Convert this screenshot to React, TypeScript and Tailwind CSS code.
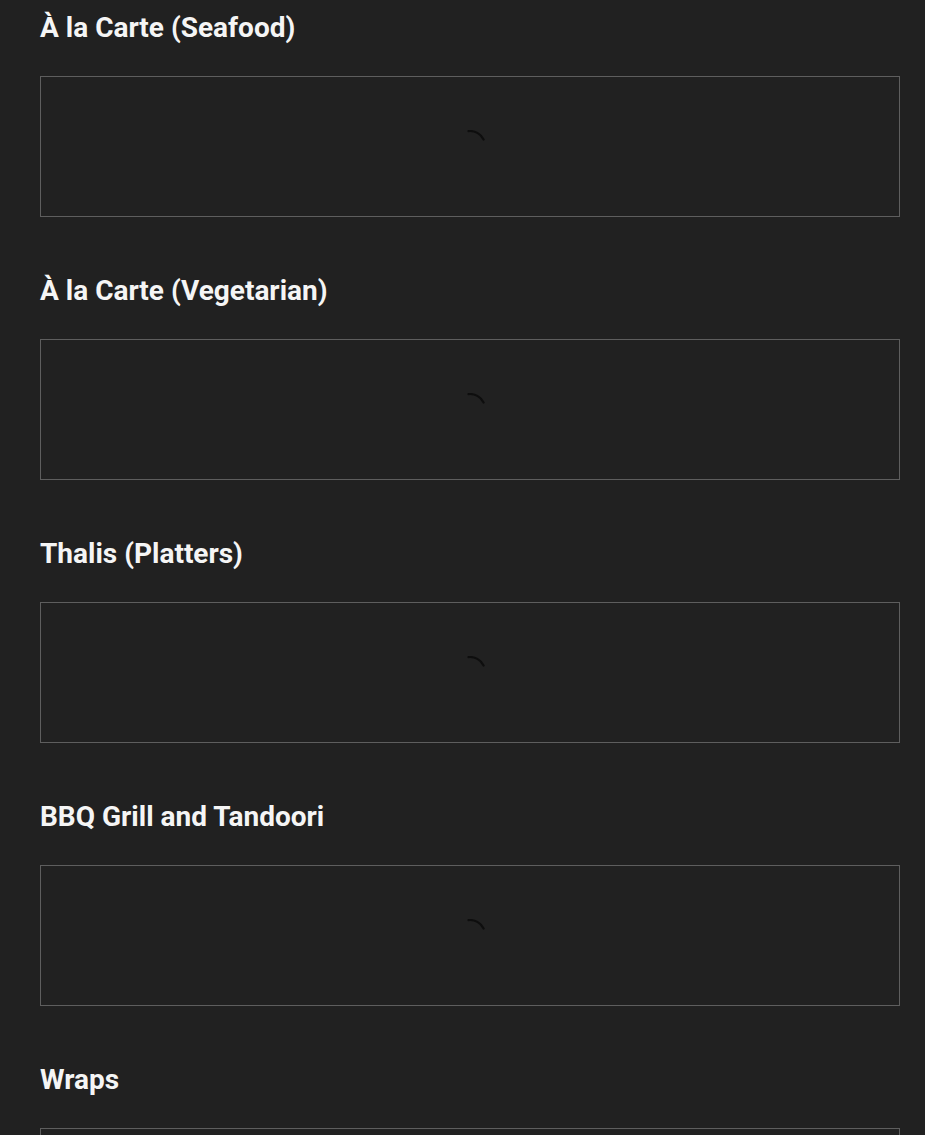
import React from "react";

const sections = [
  "À la Carte (Seafood)",
  "À la Carte (Vegetarian)",
  "Thalis (Platters)",
  "BBQ Grill and Tandoori",
  "Wraps",
];

function Spinner() {
  return (
    <svg width="32" height="32" viewBox="0 0 32 32" className="block">
      <path d="M14.5 1.1 A15 15 0 0 1 29.6 9.5" fill="none" stroke="#0e0e0e" strokeWidth="2.2" strokeLinecap="round" />
    </svg>
  );
}

export default function App() {
  return (
    <div
      className="h-[1135px] bg-[#212121] text-white pl-10 pr-[25px] pt-[12px] overflow-hidden"
      style={{ fontFamily: "Roboto, 'Liberation Sans', sans-serif" }}
    >
      {sections.map((s) => (
        <section key={s} className="mb-[58px]">
          <h2 className="text-[28px] leading-[32px] font-bold text-[#f5f5f5]">{s}</h2>
          <div className="mt-[32px] h-[141px] border border-[#5e5e5e] flex items-center justify-center">
            <div className="-mt-[2px] -ml-[1px]">
              <Spinner />
            </div>
          </div>
        </section>
      ))}
    </div>
  );
}
